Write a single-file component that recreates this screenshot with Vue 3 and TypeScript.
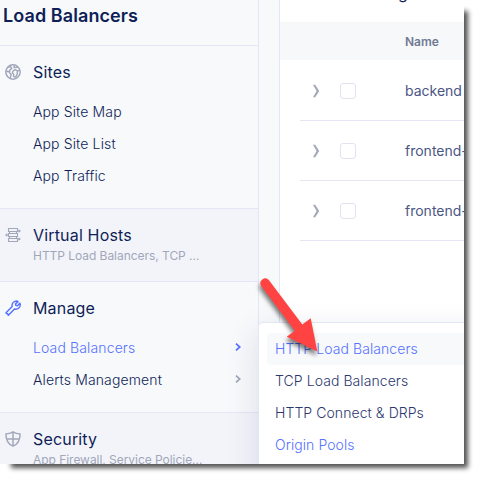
<script setup lang="ts">
interface Section {
  icon: 'globe' | 'hosts' | 'wrench' | 'shield'
  title: string
  summary?: string
  links?: { label: string; active?: boolean; submenu?: boolean }[]
}

const sections: Section[] = [
  {
    icon: 'globe',
    title: 'Sites',
    links: [{ label: 'App Site Map' }, { label: 'App Site List' }, { label: 'App Traffic' }],
  },
  { icon: 'hosts', title: 'Virtual Hosts', summary: 'HTTP Load Balancers, TCP ...' },
  {
    icon: 'wrench',
    title: 'Manage',
    links: [
      { label: 'Load Balancers', active: true, submenu: true },
      { label: 'Alerts Management', submenu: true },
    ],
  },
  { icon: 'shield', title: 'Security', summary: 'App Firewall, Service Policie...' },
]

const rows: string[] = ['backend', 'frontend-', 'frontend-']

const menu = [
  { label: 'HTTP Load Balancers', hover: true, blue: true },
  { label: 'TCP Load Balancers' },
  { label: 'HTTP Connect & DRPs' },
  { label: 'Origin Pools', blue: true },
]
</script>

<template>
  <div class="stage">
    <div class="shade"></div>
    <div class="window">
      <aside class="sidebar">
        <header class="heading">Load Balancers</header>
        <section
          v-for="s in sections"
          :key="s.title"
          class="section"
          :class="{ collapsed: s.summary, open: s.links }"
        >
          <div class="title-row">
            <svg class="icon" :class="[s.icon, { on: s.icon === 'wrench' }]" viewBox="0 0 16 16">
              <g v-if="s.icon === 'globe'">
                <circle cx="8" cy="8" r="7.2" />
                <path d="M2.8 3.4L5.6 2.6L6.8 4.4L4.8 6L4.6 8.2L2.6 7.2L1 7.6M4.2 8.6L6.2 10.6L5.2 14M9 1.2L9.2 3.6L12.8 3.2M8 7L10 5.6L12.4 6.8L12.2 10.4L10.6 13L8.6 12.6L8.6 10L7.4 9ZM12.4 7L14.8 6.4" />
              </g>
              <g v-else-if="s.icon === 'hosts'">
                <path d="M3.5 1.5H12.5V4.5H3.5ZM3.5 6.5H12.5V9.5H3.5ZM3.5 11.5H12.5V14.5H3.5ZM1 8H3.5M12.5 4H15M12.5 12H15M4.5 4.5V6.5M4.5 9.5V11.5M11.5 4.5V6.5M11.5 9.5V11.5" />
                <path class="solid" d="M13.6 2.2L16 4L13.6 5.8ZM13.6 10.2L16 12L13.6 13.8ZM2.2 6.2L0 8L2.2 9.8Z" />
              </g>
              <g v-else-if="s.icon === 'wrench'">
                <path d="M1 12.7L7.2 6.6C6.5 3.6 8.6 .9 12.2 1L13 1.7L10.5 3.9L10.8 5.4L12.4 5.7L14.8 3.2L15.3 4.4C15.3 7.8 12.6 9.7 9.5 9L3.4 15.3C2.6 14.9 3.2 13.9 2.5 13.6C1.8 13.3 1.3 13.7 1 12.7Z" />
              </g>
              <g v-else>
                <path d="M8 .8C5.8 2.2 3.5 2.8 .9 2.9C.9 8.5 2.8 13 8 15.2C13.2 13 15.1 8.5 15.1 2.9C12.5 2.8 10.2 2.2 8 .8ZM8 .8V15M1.6 7.9H14.4" />
              </g>
            </svg>
            <span class="title">{{ s.title }}</span>
          </div>
          <div v-if="s.summary" class="summary">{{ s.summary }}</div>
          <ul v-if="s.links" class="links">
            <li v-for="l in s.links" :key="l.label" :class="{ active: l.active }">
              <span>{{ l.label }}</span>
              <svg v-if="l.submenu" class="chev" viewBox="0 0 6 8"><path d="M1 .6L4.8 4L1 7.4" /></svg>
            </li>
          </ul>
        </section>
      </aside>
      <div class="gutter"></div>
      <main class="content">
        <div class="toolbar"><span>g</span></div>
        <div class="thead">Name</div>
        <div v-for="(r, i) in rows" :key="i" class="row">
          <svg class="expand" viewBox="0 0 8 14"><path d="M1 .8H3.2L7.2 7L3.2 13.2H1L4.6 7Z" /></svg>
          <span class="check"></span>
          <span class="name">{{ r }}</span>
        </div>
      </main>
      <nav class="menu">
        <div v-for="m in menu" :key="m.label" class="item" :class="{ hover: m.hover, blue: m.blue }">
          {{ m.label }}
        </div>
      </nav>
      <svg class="arrow" viewBox="0 0 80 100">
        <path d="M20.8 12.1L54.3 56.5L62.7 50.3L69.3 83.4L38.8 68.7L46.8 62.7L13.2 17.9A4.8 4.8 0 0 1 20.8 12.1Z" />
      </svg>
    </div>
  </div>
</template>

<style>
body {
  background: #fff;
  overflow: hidden;
}
</style>

<style scoped>
.stage {
  position: relative;
  width: 479px;
  height: 479px;
  overflow: hidden;
  font-family: Inter, sans-serif;
  color: #0f1e57;
}
.shade {
  position: absolute;
  left: 11px;
  top: 11px;
  width: 457px;
  height: 457px;
  background: rgba(0, 0, 0, 0.68);
  filter: blur(2.5px);
}
.window {
  position: relative;
  display: flex;
  width: 464px;
  height: 464px;
  overflow: hidden;
  background: #fff;
}
.sidebar {
  box-sizing: border-box;
  flex: none;
  width: 259px;
  background: #f7f9fb;
  border-right: 1px solid #e5e6f3;
}
.heading {
  box-sizing: border-box;
  height: 46px;
  padding: 4px 0 0 3px;
  border-bottom: 1px solid #e5e6f3;
  font-size: 18px;
  line-height: 24px;
  font-weight: 600;
  letter-spacing: 0.08px;
  white-space: nowrap;
}
.section {
  box-sizing: border-box;
  border-bottom: 1px solid #e5e6f3;
}
.open {
  padding: 14px 0 17px;
}
.collapsed {
  height: 73px;
  padding-top: 14px;
  background: #f3f4fa;
}
.title-row {
  display: flex;
  align-items: center;
  height: 24px;
  padding-left: 5px;
  gap: 12px;
}
.icon {
  flex: none;
  width: 16px;
  height: 16px;
  fill: none;
  stroke: #a0a7b9;
  stroke-width: 1.45;
  stroke-linejoin: round;
}
.icon.hosts {
  stroke-width: 1.1;
}
.icon.on {
  stroke: #5672ff;
}
.icon .solid {
  fill: #a0a7b9;
  stroke: none;
}
.title {
  font-size: 16px;
  line-height: 24px;
  letter-spacing: 0.17px;
}
.summary {
  padding-left: 33px;
  font-size: 12px;
  line-height: 18px;
  letter-spacing: -0.04px;
  color: #a1a7b9;
  white-space: nowrap;
}
.links {
  margin: 11px 0 0;
  padding: 0;
  list-style: none;
}
.links li {
  display: flex;
  align-items: center;
  justify-content: space-between;
  height: 32px;
  padding: 0 17px 0 33px;
  font-size: 14px;
  font-weight: 350;
  letter-spacing: 0.13px;
}
.links .active {
  color: #5672ff;
}
.chev {
  flex: none;
  width: 6px;
  height: 8px;
  fill: none;
  stroke: #a0a7b9;
  stroke-width: 1.7;
}
.active .chev {
  stroke: #5672ff;
}
.gutter {
  box-sizing: border-box;
  flex: none;
  width: 21px;
  background: #f7f9fb;
  border-right: 1px solid #e5e6f3;
}
.content {
  flex: 1;
  min-width: 0;
  overflow: hidden;
}
.toolbar {
  display: flex;
  align-items: flex-end;
  height: 22px;
  padding-left: 118px;
}
.toolbar span {
  margin-bottom: 19px;
  font-size: 16px;
  line-height: 20px;
}
.thead {
  height: 38px;
  padding-left: 125px;
  background: #f7f8fa;
  color: #6f7a93;
  font-size: 12px;
  font-weight: 600;
  line-height: 39px;
}
.row {
  box-sizing: border-box;
  display: flex;
  align-items: center;
  height: 60px;
  margin-left: 20px;
  padding-left: 12px;
  border-bottom: 1px solid #e5e6f3;
  color: #4b5683;
  font-size: 14px;
}
.row:nth-child(3) {
  height: 61px;
  padding-top: 1px;
}
.expand {
  flex: none;
  width: 8px;
  height: 14px;
  fill: #a0a9b8;
}
.check {
  box-sizing: border-box;
  flex: none;
  width: 16px;
  height: 16px;
  margin-left: 20px;
  border: 1px solid #e2e2f0;
  border-radius: 3px;
}
.name {
  flex: none;
  margin-left: 49px;
  white-space: nowrap;
}
.menu {
  position: absolute;
  box-sizing: border-box;
  left: 258px;
  top: 322px;
  width: 240px;
  height: 180px;
  padding: 10px 8px;
  background: #fff;
  border: 1px solid #e5e6f3;
  border-radius: 4px;
  box-shadow: 0 10px 32px rgba(30, 35, 90, 0.13);
}
.item {
  height: 32px;
  padding-left: 8px;
  border-radius: 4px;
  color: #2c376e;
  font-size: 14px;
  font-weight: 350;
  line-height: 32px;
  letter-spacing: 0.07px;
  white-space: nowrap;
}
.item.hover {
  background: #f7f9fb;
}
.item.blue {
  color: #5672ff;
}
.arrow {
  position: absolute;
  left: 248px;
  top: 268px;
  width: 80px;
  height: 100px;
  fill: #ff4343;
  filter: drop-shadow(-1px 4px 2px rgba(0, 0, 0, 0.5));
}
</style>
